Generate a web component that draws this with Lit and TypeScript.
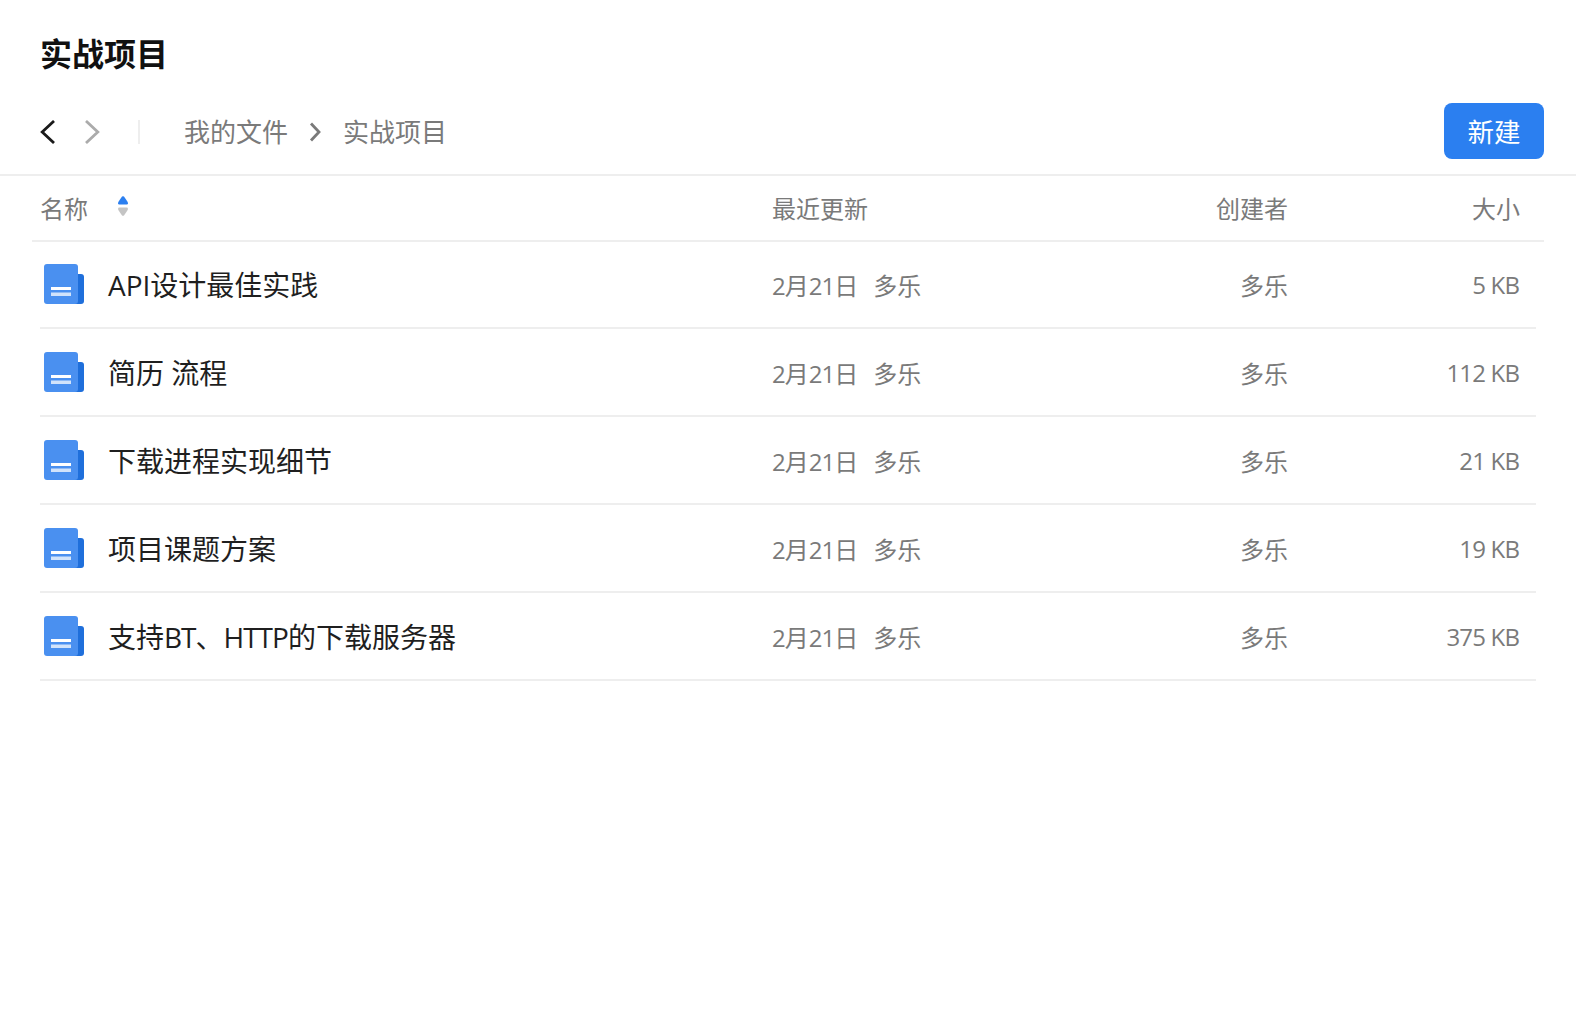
import { LitElement, html, css, svg } from "lit";
import { customElement } from "lit/decorators.js";

const rows = [
  [html`API设计最佳实践`, "5 KB"],
  [html`简历 流程`, "112 KB"],
  [html`下载进程实现细节`, "21 KB"],
  [html`项目课题方案`, "19 KB"],
  [html`支持<span class="tight">BT</span>、<span class="tight">HTTP</span>的下载服务器`, "375 KB"],
];

const docIcon = svg`<svg class="doc" width="40" height="40" viewBox="0 0 40 40">
  <path d="M30 10h7a3 3 0 0 1 3 3v24a3 3 0 0 1-3 3h-7z" fill="#1F6FDB"/>
  <rect x="0" y="0" width="34" height="40" rx="3" fill="#4A90F0"/>
  <rect x="7" y="23" width="20" height="3" fill="#fff"/>
  <rect x="7" y="28.5" width="20" height="3.5" fill="#fff" opacity=".75"/>
</svg>`;

@customElement("app-root")
export class AppRoot extends LitElement {
  static styles = css`
    :host {
      display: block;
      width: 1576px;
      height: 1009px;
      background: #fff;
      font-family: "Open Sans", "Noto Sans CJK SC", sans-serif;
      color: #7a7a7a;
      overflow: hidden;
    }
    h1 {
      margin: 0;
      padding: 32px 0 0 40px;
      height: 71px;
      box-sizing: border-box;
      font-size: 32px;
      line-height: 44px;
      font-weight: 700;
      color: #111;
    }
    .toolbar {
      display: flex;
      align-items: center;
      height: 56px;
      padding: 32px 32px 15px 40px;
      border-bottom: 2px solid #eee;
    }
    .nav { display: block; margin-top: 2px; }
    .nav.next { margin-left: 28px; }
    .divider {
      width: 2px;
      height: 24px;
      background: #eee;
      margin-left: 38px;
      margin-right: 44px;
      margin-top: 2px;
    }
    .crumb {
      font-size: 26px;
      line-height: 36px;
      color: #7a7a7a;
      margin-top: 2px;
    }
    .sep { margin: 2px 22px 0 21px; display: block; }
    .new {
      margin-left: auto;
      width: 100px;
      height: 56px;
      border: 0;
      border-radius: 8px;
      background: #2B7FF0;
      color: #fff;
      font: inherit;
      font-size: 26.5px;
      padding: 0 0 2px;
    }
    .head, .row {
      display: grid;
      grid-template-columns: 732px 284px 232px 232px;
      align-items: center;
    }
    .head {
      margin-left: 32px;
      margin-right: 32px;
      padding-left: 8px;
      height: 66px;
      padding-bottom: 2px;
      box-sizing: border-box;
      font-size: 24px;
      border-bottom: 2px solid #eee;
    }
    .name-head { display: flex; align-items: center; }
    .sort { display: block; margin-left: 30px; margin-top: -2px; }
    .end { text-align: right; }
    .size { letter-spacing: -0.8px; padding-right: 0.8px; }
    .list { margin: -1px 40px 0; }
    .row {
      height: 88px;
      box-sizing: border-box;
      border-bottom: 2px solid #eee;
      font-size: 24px;
    }
    .file { display: flex; align-items: center; color: #1f1f1f; font-size: 28px; }
    .doc { margin-left: 4px; margin-right: 24px; flex: none; }
    .tight { letter-spacing: -1px; }
    .when { display: flex; gap: 15px; }
  `;

  render() {
    return html`
      <h1>实战项目</h1>
      <div class="toolbar">
        <svg class="nav" width="16" height="24" viewBox="0 0 16 24" fill="none"><path d="M14 1 2.2 12 14 23" stroke="#1a1a1a" stroke-width="2.8"/></svg>
        <svg class="nav next" width="16" height="24" viewBox="0 0 16 24" fill="none"><path d="M2 1 13.8 12 2 23" stroke="#ababab" stroke-width="2.8"/></svg>
        <div class="divider"></div>
        <span class="crumb">我的文件</span>
        <svg class="sep" width="12" height="20" viewBox="0 0 12 20" fill="none"><path d="M2 1.5 10 10l-8 8.5" stroke="#7a7a7a" stroke-width="2.8"/></svg>
        <span class="crumb">实战项目</span>
        <button class="new">新建</button>
      </div>
      <div class="head">
        <div class="name-head">
          <span>名称</span>
          <svg class="sort" width="10" height="20" viewBox="0 0 10 20">
            <path d="M4 .6Q5 -.2 6 .6L9.7 6Q10.4 8.5 8.8 8.5H1.2Q-.4 8.5 .3 6z" fill="#2B7FF0"/>
            <path d="M4 19.4Q5 20.2 6 19.4L9.7 14Q10.4 11.5 8.8 11.5H1.2Q-.4 11.5 .3 14z" fill="#c4c4c4"/>
          </svg>
        </div>
        <div>最近更新</div>
        <div class="end">创建者</div>
        <div class="end">大小</div>
      </div>
      <div class="list">
        ${rows.map(
          ([name, size]) => html`
            <div class="row">
              <div class="file">${docIcon}<span>${name}</span></div>
              <div class="when"><span><span class="tight">2</span>月<span class="tight">21</span>日</span><span>多乐</span></div>
              <div class="end">多乐</div>
              <div class="end size">${size}</div>
            </div>
          `
        )}
      </div>
    `;
  }
}
